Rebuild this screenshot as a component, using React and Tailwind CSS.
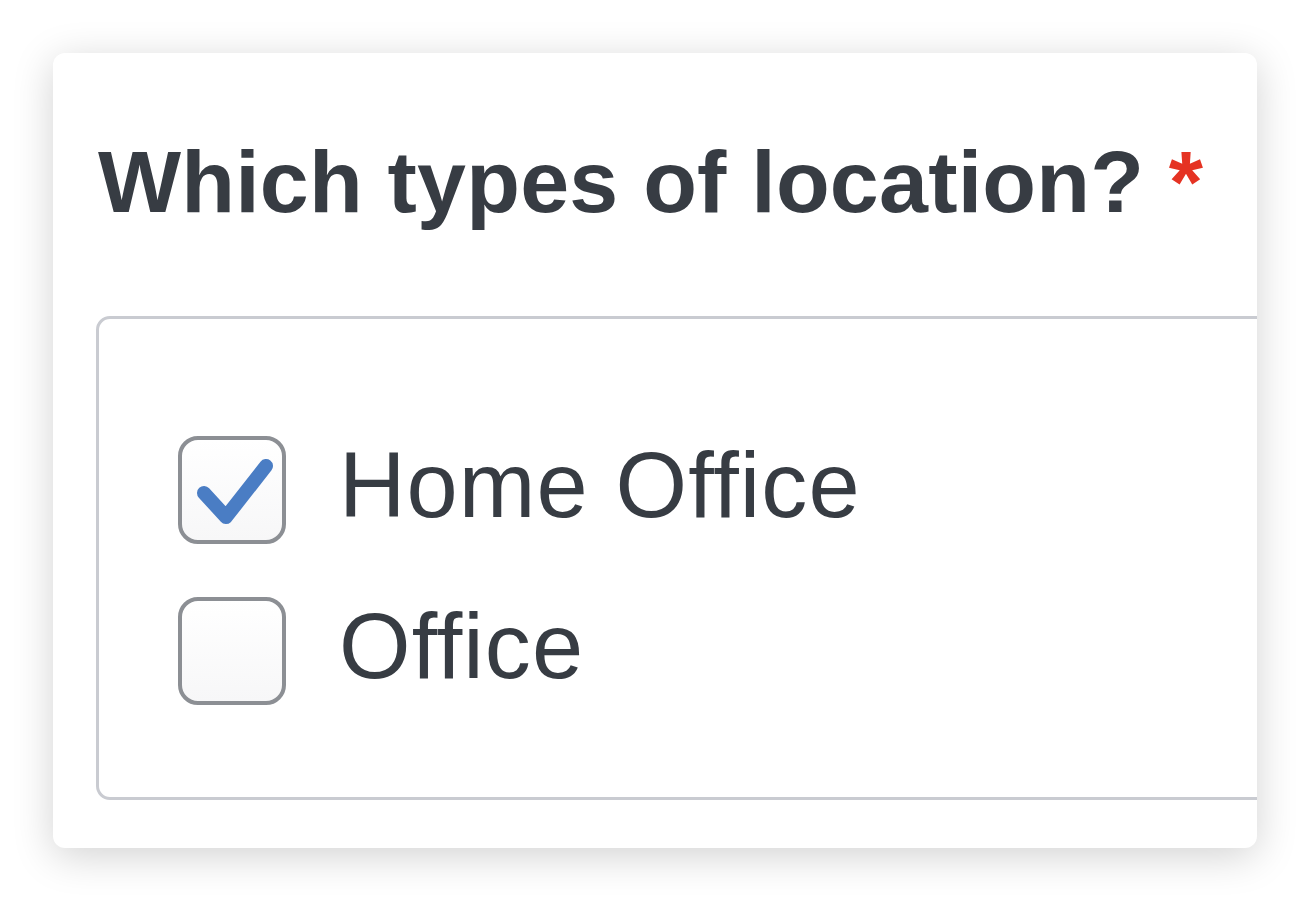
import React from 'react';

const options = [
  { label: 'Home Office', checked: true },
  { label: 'Office', checked: false },
];

const Checkbox = ({ checked }) => (
  <span className="flex h-[108px] w-[108px] shrink-0 items-center justify-center rounded-[20px] border-[4px] border-[#8c8f94] bg-gradient-to-b from-white to-[#f7f7f8]">
    {checked && (
      <svg width="100" height="100" viewBox="0 0 100 100" fill="none">
        <path d="M22 53 L44 77 L84 26" stroke="#4a7dc4" strokeWidth="14" strokeLinecap="round" strokeLinejoin="round" />
      </svg>
    )}
  </span>
);

const App = () => {
  return (
    <div className="min-h-screen bg-white p-[53px] font-['Liberation_Sans',Arial,sans-serif] text-[#373c43]">
      <div className="overflow-hidden rounded-[12px] bg-white pt-[85px] pb-[48px] pl-[45px] shadow-[0_8px_40px_rgba(0,0,0,0.18)]">
        {/* Pregunta */}
        <h1 className="text-[88px] font-bold leading-none tracking-[0.2px] whitespace-nowrap">
          Which types of location? <span className="text-[#e53323]">*</span>
        </h1>

        <fieldset className="mt-[90px] -ml-[2px] w-[1300px] rounded-[14px] border-[3px] border-[#c9cbd1] pt-[117px] pb-[92px] pl-[79px]">
          <div className="flex flex-col gap-[53px]">
            {options.map((opt) => (
              <label key={opt.label} className="flex items-center">
                <Checkbox checked={opt.checked} />
                <span className="ml-[53px] mb-[10px] text-[92px] leading-none tracking-[1.1px] whitespace-nowrap">{opt.label}</span>
              </label>
            ))}
          </div>
        </fieldset>
      </div>
    </div>
  );
};

export default App;
